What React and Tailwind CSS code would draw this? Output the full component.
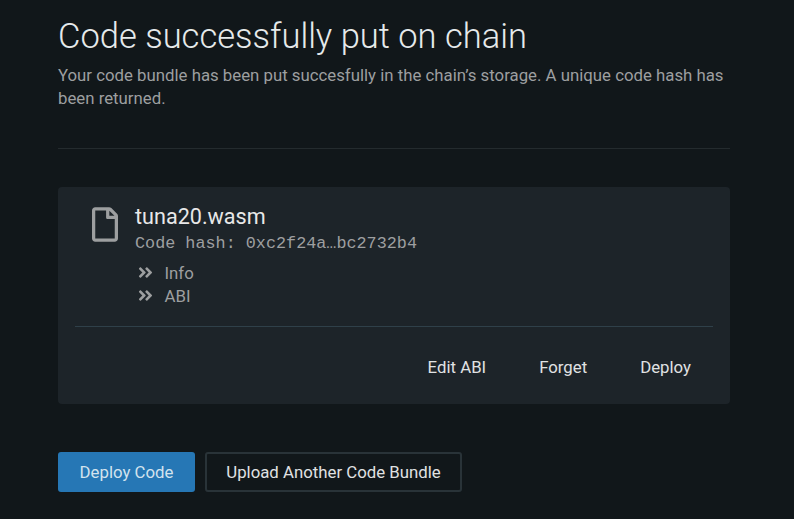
import { FaRegFile, FaAngleDoubleRight } from "react-icons/fa";

function Row({ label }) {
  return (
    <div className="flex h-[23px] items-center">
      <FaAngleDoubleRight className="mr-[11px] mb-[2px] ml-[1.5px] h-[17px] w-[17px]" />
      <span className="leading-[23px]">{label}</span>
    </div>
  );
}

export default function App() {
  return (
    <main className="h-[519px] overflow-hidden bg-[#11171a] pl-[58px] font-[Roboto,sans-serif] text-[16.8px] text-[#9d9fa0]">
      <div className="w-[672px]">
        <h1 className="pt-[14px] text-[34.5px] leading-[44px] font-light whitespace-nowrap text-[#e6eaeb]">Code successfully put on chain</h1>
        <p className="mt-[6px] leading-[23px] whitespace-nowrap">
          Your code bundle has been put succesfully in the chain’s storage. A unique code hash has
          <br />
          been returned.
        </p>
        <div className="mt-[38px] h-px bg-[#242b2e]" />
        <section className="mt-[38px] h-[217px] rounded bg-[#1d2429] px-[17px] pt-[18px]">
          <div className="flex h-[122px] border-b border-[#2f4049]">
            <FaRegFile className="mt-[1.5px] ml-[17px] h-[35px] w-[26px] shrink-0" />
            <div className="ml-[17px]">
              <div className="text-[21.6px] leading-[24px] text-[#e8e8e8]">tuna20.wasm</div>
              <div className="mt-[4px] font-['Liberation_Mono',monospace] text-[16.8px] leading-[22px]">Code hash: 0xc2f24a…bc2732b4</div>
              <div className="mt-[7px]">
                <Row label="Info" />
                <Row label="ABI" />
              </div>
            </div>
          </div>
          <div className="mt-[20px] flex justify-end gap-[53px] pr-[22px] leading-[40px] text-[#e0e2e3]">
            <button>Edit ABI</button>
            <button>Forget</button>
            <button>Deploy</button>
          </div>
        </section>
        <div className="mt-[48px] flex gap-[10px] text-[#e0e2e3]">
          <button className="h-10 w-[137px] rounded-[3px] bg-[#2677b5] pt-px text-[#d3e3ee]">Deploy Code</button>
          <button className="h-10 w-[257px] rounded-[3px] border-2 border-[#293338] pt-px">Upload Another Code Bundle</button>
        </div>
      </div>
    </main>
  );
}
